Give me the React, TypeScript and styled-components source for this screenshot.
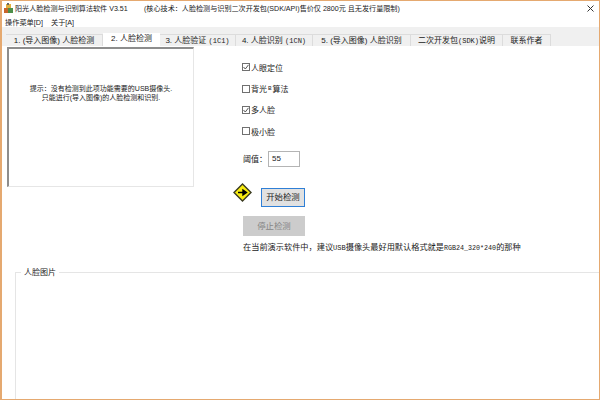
import { createGlobalStyle } from "styled-components";
import styled from "styled-components";

const GlobalStyle = createGlobalStyle`
  html, body {
    margin: 0;
    padding: 0;
    width: 600px;
    height: 400px;
    overflow: hidden;
    background: #fff;
  }
`;

const FONT = `"Liberation Sans", "Noto Sans CJK SC", sans-serif`;

const Window = styled.div`
  box-sizing: border-box;
  width: 600px;
  height: 400px;
  border: 1px solid #e5a970;
  border-left-width: 2px;
  display: flex;
  flex-direction: column;
  overflow: hidden;
  background: #fff;
  font-family: ${FONT};
  font-size: 8px;
  color: #222;
`;

const TitleBar = styled.div`
  height: 14px;
  flex: none;
  display: flex;
  align-items: center;
  padding: 0 5px 0 2px;
  font-size: 7.1px;
`;

const AppTitle = styled.span`
  margin-left: 2px;
  width: 129px;
  white-space: nowrap;
`;

const TitleNote = styled.span`
  flex: 1;
  white-space: nowrap;
`;

const MenuBar = styled.div`
  height: 11px;
  flex: none;
  display: flex;
  gap: 8px;
  align-items: center;
  padding: 1px 3px 0;
  font-size: 7.2px;
`;

const TabStrip = styled.div`
  height: 19px;
  flex: none;
  box-sizing: border-box;
  padding-left: 4px;
  background: #f0f0f0;
  display: flex;
  align-items: flex-end;
`;

const Tab = styled.div<{ $active?: boolean; $width: number }>`
  box-sizing: border-box;
  flex: none;
  width: ${props => props.$width}px;
  height: ${props => (props.$active ? 13 : 12)}px;
  background: ${props => (props.$active ? "#fff" : "#f0f0f0")};
  border: 1px solid #dcdcdc;
  border-width: ${props => (props.$active ? "0" : "1px 1px 0 0")};
  text-align: center;
  line-height: 12px;
  white-space: nowrap;
`;

const Latin = styled.span<{ $size?: number }>`
  font-family: "Liberation Mono", monospace;
  font-size: ${props => props.$size || 7}px;
`;

const Content = styled.div`
  flex: 1;
  display: flex;
  flex-direction: column;
  padding: 1px 0 0 5px;
  min-height: 0;
`;

const TopArea = styled.div`
  display: flex;
  height: 216px;
  flex: none;
`;

const Preview = styled.div`
  box-sizing: border-box;
  width: 187px;
  height: 140px;
  border-top: 2px solid #8d8d8d;
  border-left: 2px solid #8d8d8d;
  border-right: 1px solid #e6e6e6;
  border-bottom: 1px solid #e6e6e6;
  padding-top: 35px;
  text-align: center;
  font-size: 7px;
  line-height: 9px;
`;

const Controls = styled.div`
  margin-left: 48px;
  padding-top: 9.67px;
  display: flex;
  flex-direction: column;
  align-items: flex-start;
`;

const CheckRow = styled.label`
  display: flex;
  align-items: center;
  gap: 1px;
  height: 21.33px;
`;

const CheckBox = styled.span`
  box-sizing: border-box;
  width: 8px;
  height: 8px;
  border: 1px solid #707070;
  display: flex;
  background: #fff;
`;

const ThresholdRow = styled.div`
  display: flex;
  align-items: center;
  margin: 9px 0 0 1px;
  width: 57px;
  justify-content: space-between;
`;

const ThresholdInput = styled.div`
  box-sizing: border-box;
  width: 32px;
  height: 16px;
  border: 1px solid #b4b4b4;
  padding: 0 3px;
  line-height: 14px;
`;

const StartRow = styled.div`
  display: flex;
  align-items: flex-start;
  margin: 21px 0 0 -9px;
`;

const Arrow = styled.svg`
  width: 19px;
  height: 19px;
  margin: -5px 9px 0 0;
`;

const StartButton = styled.div`
  box-sizing: border-box;
  width: 44px;
  height: 19px;
  border: 1px solid #2f7fd6;
  background: #e1e1e1;
  text-align: center;
  line-height: 17px;
  font-size: 8.4px;
`;

const StopButton = styled.div`
  width: 62px;
  height: 20px;
  margin: 9px 0 0 1px;
  background: #cccccc;
  color: #858585;
  text-align: center;
  line-height: 20px;
  font-size: 8.4px;
`;

const Hint = styled.div`
  margin: 7px 0 0 1px;
  white-space: nowrap;
  line-height: 10px;
  font-size: 8.2px;
`;

const FaceGroup = styled.div`
  flex: 1;
  margin: 9px 0 0 8px;
  border-top: 1px solid #e5e5e5;
  border-left: 1px solid #e5e5e5;
  position: relative;
`;

const GroupLabel = styled.span`
  position: absolute;
  top: -6px;
  left: 5px;
  padding: 0 3px;
  background: #fff;
  line-height: 12px;
`;

const CloseIcon = styled.svg`
  width: 7px;
  height: 7px;
`;

function WindowIcon() {
    return <svg width="9" height="10" viewBox="0 0 9 10">
        <rect x="0" y="5" width="4" height="5" fill="#c8662c" />
        <rect x="4" y="5" width="5" height="5" fill="#4c8f4a" />
        <rect x="2" y="1" width="5" height="4" fill="#e0b040" />
        <rect x="3" y="0" width="2" height="2" fill="#666" />
    </svg>;
}

function Tick() {
    return <svg width="6" height="6" viewBox="0 0 6 6">
        <path d="M0.5 3 L2.3 5 L5.5 0.8" fill="none" stroke="#555" strokeWidth="1" />
    </svg>;
}

const tabs = [
    { label: <>1. (导入图像) 人脸检测</>, width: 97 },
    { label: <>2. 人脸检测</>, width: 57, active: true },
    { label: <>3. 人脸验证 <Latin>(1C1)</Latin></>, width: 76 },
    { label: <>4. 人脸识别 <Latin>(1CN)</Latin></>, width: 77 },
    { label: <>5. (导入图像) 人脸识别</>, width: 98 },
    { label: <>二次开发包<Latin>(SDK)</Latin>说明</>, width: 92 },
    { label: <>联系作者</>, width: 48 },
];

const options = [
    { label: <>人眼定位</>, checked: true },
    { label: <>背光<Latin $size={6}>B</Latin>算法</>, checked: false },
    { label: <>多人脸</>, checked: true },
    { label: <>极小脸</>, checked: false },
];

function App() {
    return <Window>
        <GlobalStyle />
        <TitleBar>
            <WindowIcon />
            <AppTitle>阳光人脸检测与识别算法软件 V3.51</AppTitle>
            <TitleNote>(核心技术：人脸检测与识别二次开发包(SDK/API)售价仅 2800元 且无发行量限制)</TitleNote>
            <CloseIcon viewBox="0 0 7 7">
                <path d="M0.5 0.5 L6.5 6.5 M6.5 0.5 L0.5 6.5" stroke="#333" strokeWidth="1" />
            </CloseIcon>
        </TitleBar>
        <MenuBar>
            <span>操作菜单[D]</span>
            <span>关于[A]</span>
        </MenuBar>
        <TabStrip>
            {tabs.map((tab, i) =>
                <Tab key={i} $active={tab.active} $width={tab.width}>{tab.label}</Tab>
            )}
        </TabStrip>
        <Content>
            <TopArea>
                <Preview>
                    提示：没有检测到此项功能需要的USB摄像头.<br />
                    只能进行(导入图像)的人脸检测和识别.
                </Preview>
                <Controls>
                    {options.map((option, i) =>
                        <CheckRow key={i}>
                            <CheckBox>{option.checked && <Tick />}</CheckBox>
                            {option.label}
                        </CheckRow>
                    )}
                    <ThresholdRow>
                        阈值：
                        <ThresholdInput>55</ThresholdInput>
                    </ThresholdRow>
                    <StartRow>
                        <Arrow viewBox="0 0 19 19">
                            <path d="M9.5 1 L18 9.5 L9.5 18 L1 9.5 Z" fill="#f8ec10" stroke="#3a3a20" strokeWidth="1.4" />
                            <path d="M5 9.5 H11 M10 7 L13.5 9.5 L10 12 Z" fill="#000" stroke="#000" strokeWidth="1.4" />
                        </Arrow>
                        <StartButton>开始检测</StartButton>
                    </StartRow>
                    <StopButton>停止检测</StopButton>
                    <Hint>在当前演示软件中，建议<Latin>USB</Latin>摄像头最好用默认格式就是<Latin $size={6.7}>RGB24_320*240</Latin>的那种</Hint>
                </Controls>
            </TopArea>
            <FaceGroup>
                <GroupLabel>人脸图片</GroupLabel>
            </FaceGroup>
        </Content>
    </Window>;
}

export default App;
